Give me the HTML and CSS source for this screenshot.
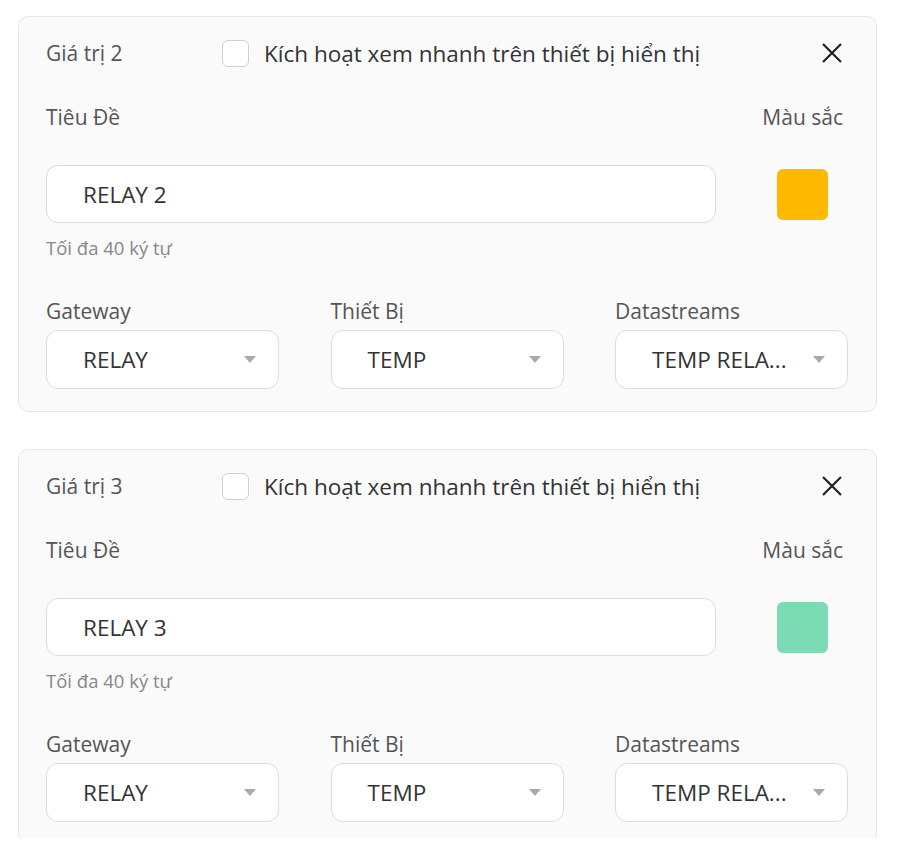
FILE: index.html
```html
<!DOCTYPE html>
<html lang="vi">
<head>
<meta charset="utf-8">
<title>Giá trị</title>
<link rel="stylesheet" href="styles.css">
</head>
<body>
<div class="page">
  <section class="card">
    <div class="card-head">
      <div class="card-title">Giá trị 2</div>
      <label class="check">
        <span class="check-box"></span>
        <span class="check-label">Kích hoạt xem nhanh trên thiết bị hiển thị</span>
      </label>
      <button class="close" aria-label="Đóng">
        <svg width="22" height="22" viewBox="0 0 22 22"><path d="M2 2L20 20M20 2L2 20" stroke="#222" stroke-width="2.2" fill="none"/></svg>
      </button>
    </div>
    <div class="title-grid">
      <div class="field-label">Tiêu Đề</div>
      <div class="field-label color-label">Màu sắc</div>
      <div class="text-input">RELAY 2</div>
      <div class="swatch amber"></div>
      <div class="helper">Tối đa 40 ký tự</div>
    </div>
    <div class="select-row">
      <div class="select-field">
        <div class="field-label">Gateway</div>
        <div class="select"><span class="select-value">RELAY</span><span class="caret"></span></div>
      </div>
      <div class="select-field">
        <div class="field-label">Thiết Bị</div>
        <div class="select"><span class="select-value">TEMP</span><span class="caret"></span></div>
      </div>
      <div class="select-field">
        <div class="field-label">Datastreams</div>
        <div class="select"><span class="select-value">TEMP RELA...</span><span class="caret"></span></div>
      </div>
    </div>
  </section>

  <section class="card">
    <div class="card-head">
      <div class="card-title">Giá trị 3</div>
      <label class="check">
        <span class="check-box"></span>
        <span class="check-label">Kích hoạt xem nhanh trên thiết bị hiển thị</span>
      </label>
      <button class="close" aria-label="Đóng">
        <svg width="22" height="22" viewBox="0 0 22 22"><path d="M2 2L20 20M20 2L2 20" stroke="#222" stroke-width="2.2" fill="none"/></svg>
      </button>
    </div>
    <div class="title-grid">
      <div class="field-label">Tiêu Đề</div>
      <div class="field-label color-label">Màu sắc</div>
      <div class="text-input">RELAY 3</div>
      <div class="swatch mint"></div>
      <div class="helper">Tối đa 40 ký tự</div>
    </div>
    <div class="select-row">
      <div class="select-field">
        <div class="field-label">Gateway</div>
        <div class="select"><span class="select-value">RELAY</span><span class="caret"></span></div>
      </div>
      <div class="select-field">
        <div class="field-label">Thiết Bị</div>
        <div class="select"><span class="select-value">TEMP</span><span class="caret"></span></div>
      </div>
      <div class="select-field">
        <div class="field-label">Datastreams</div>
        <div class="select"><span class="select-value">TEMP RELA...</span><span class="caret"></span></div>
      </div>
    </div>
  </section>
</div>
</body>
</html>
```

FILE: styles.css
```css
* { box-sizing: border-box; }

html, body {
  margin: 0;
  padding: 0;
  background: #ffffff;
}

body {
  font-family: "Open Sans", "Noto Sans", "Liberation Sans", sans-serif;
  color: #333;
}

.page {
  height: 838px;
  overflow: hidden;
  padding: 16px 20px 0 18px;
  display: flex;
  flex-direction: column;
  gap: 37px;
}

.card {
  flex: none;
  height: 396px;
  background: #fafafa;
  border: 1px solid #e6e6e6;
  border-radius: 10px;
  padding: 22px 28px 0 27px;
}

.card-head {
  display: flex;
  align-items: center;
  height: 28px;
}

.card-title {
  width: 176px;
  font-size: 21px;
  color: #555;
  white-space: nowrap;
}

.check {
  display: flex;
  align-items: center;
  gap: 15px;
  flex: 1;
}

.check-box {
  flex: none;
  width: 27px;
  height: 27px;
  border: 1px solid #d0d0d0;
  border-radius: 6px;
  background: #fff;
}

.check-label {
  font-size: 22.5px;
  color: #333;
  white-space: nowrap;
}

.close {
  flex: none;
  border: 0;
  background: none;
  padding: 0;
  margin-right: 5px;
  width: 22px;
  height: 22px;
  display: flex;
}

.title-grid {
  display: grid;
  grid-template-columns: 1fr auto;
  column-gap: 46px;
  margin-top: 37px;
}

.field-label {
  font-size: 21px;
  line-height: 27px;
  color: #555;
  white-space: nowrap;
}

.color-label {
  margin-right: 5px;
}

.text-input {
  margin-top: 34px;
  height: 58px;
  background: #fff;
  border: 1px solid #dcdcdc;
  border-radius: 12px;
  padding-left: 36px;
  display: flex;
  align-items: center;
  font-size: 22.5px;
  color: #333;
}

.swatch {
  margin-top: 34px;
  align-self: center;
  justify-self: center;
  width: 51px;
  height: 51px;
  border-radius: 6px;
  margin-right: 5px;
}

.amber { background: #ffb900; }
.mint { background: #7adbb4; }

.helper {
  grid-column: 1 / 3;
  margin-top: 15px;
  font-size: 18.5px;
  line-height: 20px;
  color: #888;
}

.select-row {
  display: grid;
  grid-template-columns: repeat(3, 233px);
  justify-content: space-between;
  margin-top: 40px;
}

.field-label + .select { margin-top: 5px; }

.select {
  height: 59px;
  background: #fff;
  border: 1px solid #dcdcdc;
  border-radius: 12px;
  padding: 0 22px 0 36px;
  display: flex;
  align-items: center;
  gap: 12px;
}

.select-value {
  flex: 1;
  min-width: 0;
  font-size: 22.5px;
  color: #333;
  white-space: nowrap;
}

.caret {
  flex: none;
  width: 0;
  height: 0;
  border-left: 6px solid transparent;
  border-right: 6px solid transparent;
  border-top: 7px solid #aaa;
}
```
